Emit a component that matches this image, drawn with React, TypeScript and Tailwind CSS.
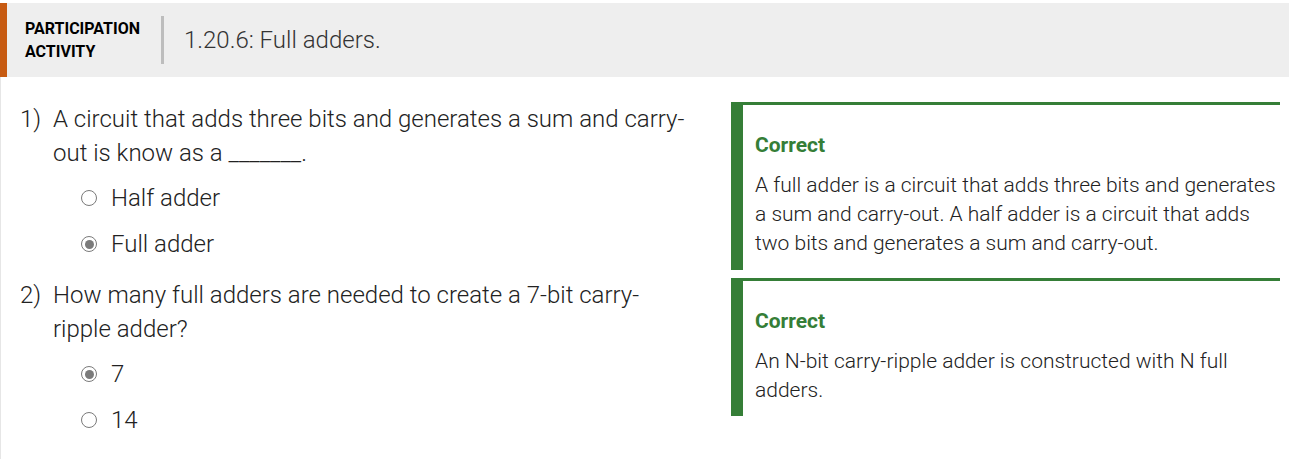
import React from "react";

type Option = { label: string; checked?: boolean };

const questions: { num: string; text: string; options: Option[] }[] = [
  {
    num: "1)",
    text: "A circuit that adds three bits and generates a sum and carry-out is know as a _______.",
    options: [{ label: "Half adder" }, { label: "Full adder", checked: true }],
  },
  {
    num: "2)",
    text: "How many full adders are needed to create a 7-bit carry-ripple adder?",
    options: [{ label: "7", checked: true }, { label: "14" }],
  },
];

const feedback = [
  "A full adder is a circuit that adds three bits and generates a sum and carry-out. A half adder is a circuit that adds two bits and generates a sum and carry-out.",
  "An N-bit carry-ripple adder is constructed with N full adders.",
];

function Radio({ checked }: { checked?: boolean }) {
  return (
    <span className="w-4 h-4 rounded-full border-[1.5px] border-[#7a7a7a] flex items-center justify-center shrink-0">
      {checked && <span className="w-[9px] h-[9px] rounded-full bg-[#7a7a7a]" />}
    </span>
  );
}

export default function App() {
  return (
    <div className="w-[1289px] h-[459px] bg-white font-['Roboto',sans-serif] text-[#222] overflow-hidden">
      {/* Header */}
      <div className="mt-[3px] h-[74px] bg-[#eeeeee] border-l-[7px] border-[#c75b12] flex items-center">
        <div className="pl-[18px] w-[154px] text-[16px] font-bold leading-[23px] text-black">
          PARTICIPATION
          <br />
          ACTIVITY
        </div>
        <div className="w-[3px] h-[48px] bg-[#bdbdbd]" />
        <div className="ml-[20px] text-[24px] font-light text-[#333]">1.20.6: Full adders.</div>
      </div>

      {/* Body */}
      <div className="h-[382px] border-l border-[#e6e6e6] pr-[9px] flex">
        {/* Questions */}
        <div className="w-[730px] pl-[19px] pt-[25px] flex flex-col gap-[11px]">
          {questions.map((q) => (
            <div key={q.num} className="flex">
              <div className="w-[33px] text-[24px] font-light leading-[35px]">{q.num}</div>
              <div className="w-[640px]">
                <div className="text-[24px] font-light leading-[34px] mb-[5px]">{q.text}</div>
                {q.options.map((o) => (
                  <div key={o.label} className="h-[46px] flex items-center gap-[14px] pl-[28px]">
                    <Radio checked={o.checked} />
                    <span className="text-[24px] font-light">{o.label}</span>
                  </div>
                ))}
              </div>
            </div>
          ))}
        </div>

        {/* Feedback */}
        <div className="flex-1 pt-[25px] flex flex-col gap-[8px]">
          {feedback.map((f, i) => (
            <div
              key={i}
              className={`border-t-[3px] border-l-[12px] border-[#357e37] pl-[12px] pr-[4px] pt-[26px] ${
                i === 0 ? "pb-[12px]" : "pb-[11px]"
              }`}
            >
              <div className="text-[21px] font-bold text-[#357e37] leading-[29px] mb-[11px]">Correct</div>
              <div className="text-[21px] font-light leading-[29px] text-[#222]">{f}</div>
            </div>
          ))}
        </div>
      </div>
    </div>
  );
}
